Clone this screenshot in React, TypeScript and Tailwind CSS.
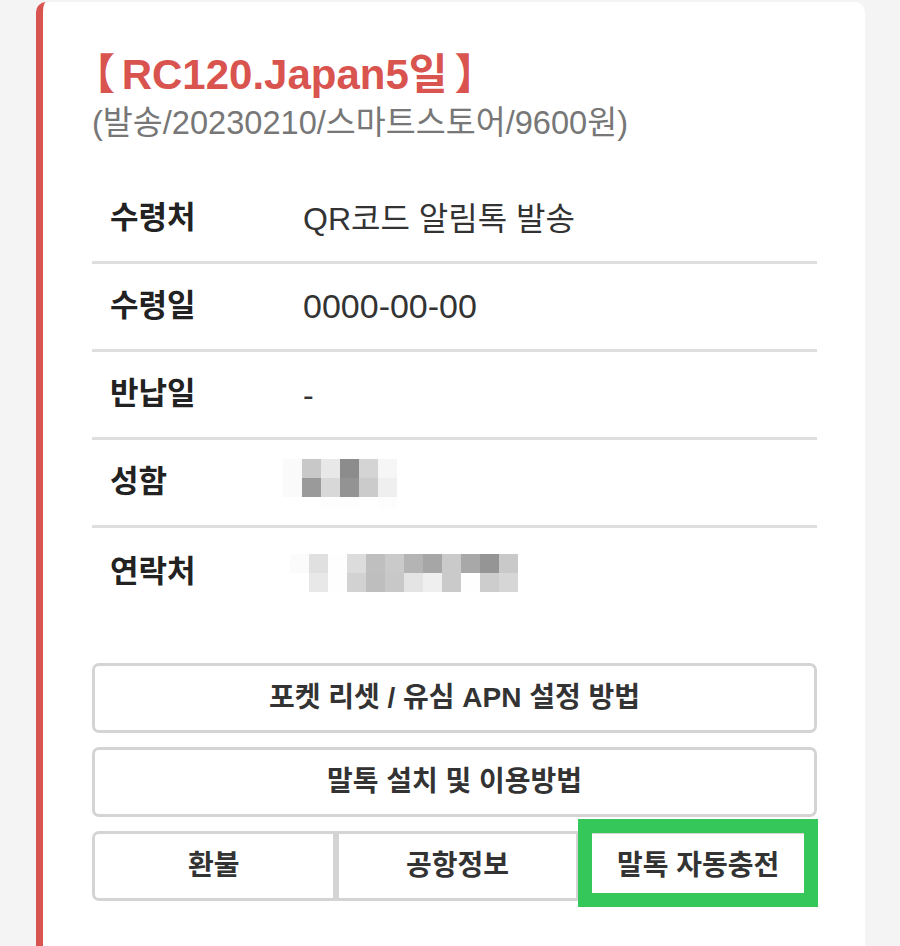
import React from "react";

const FONT = '"Liberation Sans", "Noto Sans CJK KR", sans-serif';

const nameBlocks: string[][] = [
  ["#fafafa", "#c8c8c8", "#e8e8e8", "#8c8c8c", "#d4d4d4", "#f6f6f6"],
  ["#fafafa", "#9a9a9a", "#d8d8d8", "#939393", "#cbcbcb", "#efefef"],
  ["#ffffff", "#ffffff", "#fdfdfd", "#fdfdfd", "#ffffff", "#fdfdfd"],
];

const phoneBlocks: string[][] = [
  ["#fbfbfb", "#e0e0e0", "#fefefe", "#dcdcdc", "#bfbfbf", "#cacaca", "#b4b4b4", "#a6a6a6", "#cacaca", "#a8a8a8", "#959595", "#c9c9c9"],
  ["#ffffff", "#e8e8e8", "#fefefe", "#d2d2d2", "#bebebe", "#c8c8c8", "#e4e4e4", "#efefef", "#cacaca", "#fefefe", "#cdcdcd", "#d6d6d6"],
];

function Pixels({ rows, rowHeights }: { rows: string[][]; rowHeights: number[] }) {
  const cols = rows[0].length;
  const total = rowHeights.reduce((a, b) => a + b, 0);
  let y = 0;
  return (
    <svg width={cols * 19} height={total} className="block">
      {rows.map((r, ri) => {
        const top = y;
        y += rowHeights[ri];
        return r.map((c, ci) => (
          <rect key={`${ri}-${ci}`} x={ci * 19} y={top} width={19} height={rowHeights[ri]} fill={c} />
        ));
      })}
    </svg>
  );
}

function Row({ label, children, last }: { label: string; children: React.ReactNode; last?: boolean }) {
  return (
    <div className={`flex items-center h-[88px] ${last ? "" : "border-b-[3px] border-[#dedede]"}`}>
      <div className="w-[211px] pl-[18px] text-[31px] font-bold text-[#222]">{label}</div>
      <div className="flex-1 text-[32px] text-[#333]">{children}</div>
    </div>
  );
}

const btn = "bg-white text-[28px] font-bold text-[#333] border-[3px] border-[#d4d4d4]";

export default function App() {
  return (
    <div className="min-h-[946px] bg-[#f4f4f4] pt-[2px] overflow-hidden" style={{ fontFamily: FONT }}>
      <div className="ml-[36px] w-[829px] min-h-[960px] bg-white rounded-tl-[10px] rounded-tr-[10px] border-l-[7px] border-[#d9534f] pl-[49px] pr-[48px] pt-[49px]">
        <div className="text-[42px] leading-[48px] font-bold text-[#d9534f] whitespace-nowrap">
          <span className="ml-[-19px] tracking-[-5px]">【</span> RC120.Japan5일<span className="ml-[7px]">】</span>
        </div>
        <div className="mt-[5px] text-[32.6px] leading-[38px] text-[#777]">(발송/20230210/스마트스토어/9600원)</div>

        <div className="mt-[34px]">
          <Row label="수령처">QR코드 알림톡 발송</Row>
          <Row label="수령일"><span className="text-[34px]">0000-00-00</span></Row>
          <Row label="반납일">-</Row>
          <Row label="성함">
            <div className="ml-[-20px] mt-[2px]">
              <Pixels rows={nameBlocks} rowHeights={[19, 19, 11]} />
            </div>
          </Row>
          <Row label="연락처" last>
            <div className="ml-[-13px] mt-[2px]">
              <Pixels rows={phoneBlocks} rowHeights={[19, 19]} />
            </div>
          </Row>
        </div>

        <div className="mt-[47px] flex flex-col gap-[14px]">
          <button className={`h-[70px] w-full rounded-[7px] ${btn}`}>포켓 리셋 / 유심 APN 설정 방법</button>
          <button className={`h-[70px] w-full rounded-[7px] ${btn}`}>말톡 설치 및 이용방법</button>
          <div className="flex h-[70px]">
            <button className={`flex-1 rounded-l-[7px] ${btn}`}>환불</button>
            <button className={`flex-1 ${btn}`}>공항정보</button>
            <div className="relative flex-1">
              <button className={`h-full w-full rounded-r-[7px] ${btn}`}>말톡 자동충전</button>
              <div className="pointer-events-none absolute left-[-1px] right-[-1px] top-[-12px] bottom-[-6px] border-[14px] border-[#35c759]" />
            </div>
          </div>
        </div>
      </div>
    </div>
  );
}
